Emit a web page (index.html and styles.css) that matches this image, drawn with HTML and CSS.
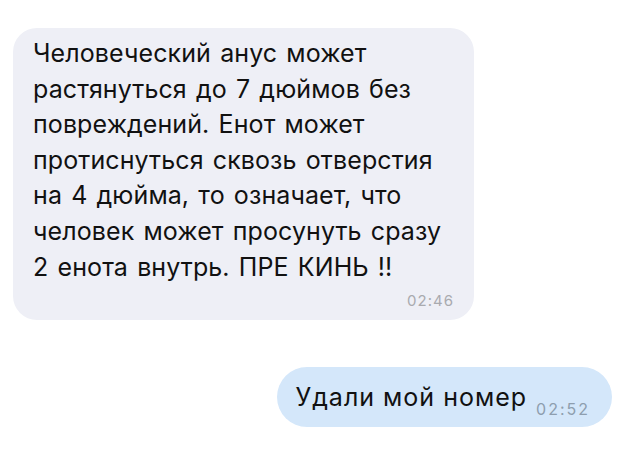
FILE: index.html
```html
<!DOCTYPE html>
<html lang="ru">
<head>
<meta charset="utf-8">
<link rel="stylesheet" href="styles.css">
</head>
<body>
<main class="chat">
  <div class="msg msg-in">
    <p class="msg-text">
      <span class="line">Человеческий анус может</span>
      <span class="line">растянуться до 7 дюймов без</span>
      <span class="line">повреждений. Енот может</span>
      <span class="line">протиснуться сквозь отверстия</span>
      <span class="line">на 4 дюйма, то означает, что</span>
      <span class="line">человек может просунуть сразу</span>
      <span class="line">2 енота внутрь. ПРЕ КИНЬ !!</span>
    </p>
    <time class="msg-time">02:46</time>
  </div>
  <div class="msg msg-out">
    <span class="msg-text-out">Удали мой номер</span>
    <time class="msg-time-out">02:52</time>
  </div>
</main>
</body>
</html>
```
FILE: styles.css
```css
html, body {
  margin: 0;
  padding: 0;
  background: #ffffff;
}

body {
  width: 619px;
  height: 470px;
  overflow: hidden;
  font-family: Inter, "Liberation Sans", sans-serif;
  color: #111111;
}

.chat {
  display: flex;
  flex-direction: column;
  padding: 28px 7px 0 13px;
}

/* incoming message */
.msg-in {
  align-self: flex-start;
  width: 461px;
  box-sizing: border-box;
  background: #eeeff6;
  border-radius: 24px;
  padding: 8px 21px 10px 20px;
  display: flex;
  flex-direction: column;
}

.msg-text {
  margin: 0;
  font-size: 25px;
  line-height: 35.6px;
  letter-spacing: 0.1px;
  word-spacing: 2px;
}

.line {
  display: block;
  white-space: nowrap;
}

.msg-time {
  align-self: flex-end;
  margin-top: 6px;
  font-size: 15px;
  letter-spacing: 1px;
  margin-right: -1px;
  color: #a9aaaf;
}

/* outgoing message */
.msg-out {
  align-self: flex-end;
  margin-top: 47px;
  height: 60px;
  box-sizing: border-box;
  background: #d4e7fa;
  border-radius: 30px;
  padding: 0 22px 0 18px;
  display: flex;
  align-items: center;
  gap: 9px;
}

.msg-text-out {
  font-size: 25px;
  letter-spacing: 1px;
  color: #111111;
}

.msg-time-out {
  align-self: flex-end;
  margin-bottom: 8px;
  font-size: 16px;
  letter-spacing: 2px;
  color: #8e9eae;
}
```
